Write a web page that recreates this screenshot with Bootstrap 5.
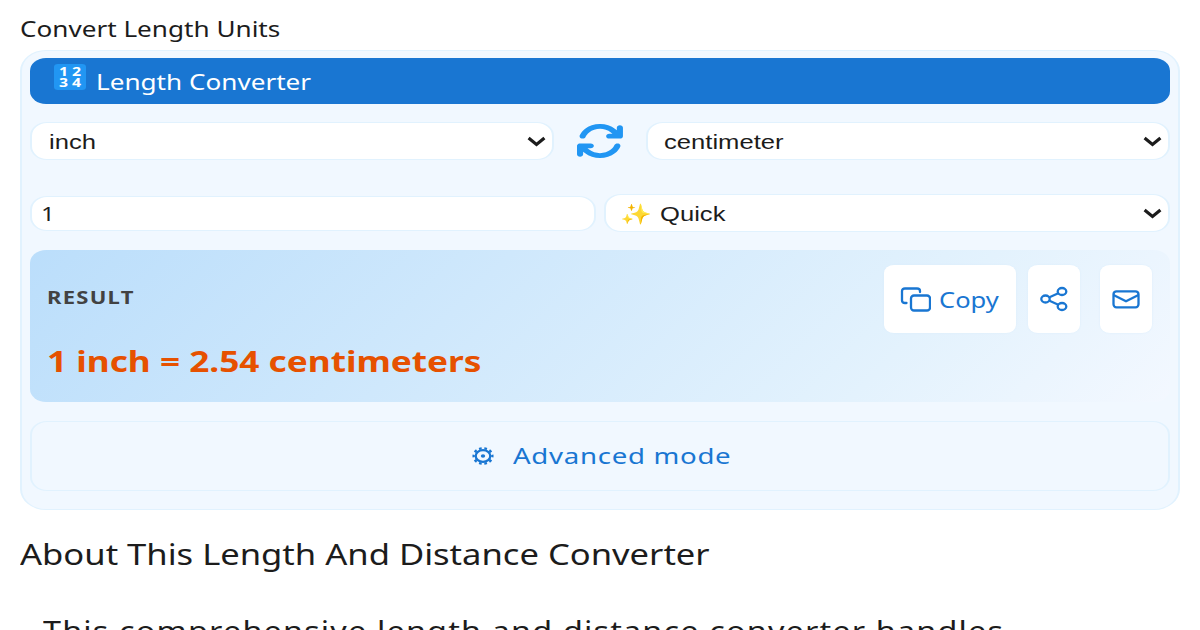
<!DOCTYPE html>
<html lang="en">
<head>
<meta charset="utf-8">
<meta name="viewport" content="width=device-width, initial-scale=1">
<title>Length Converter</title>
<link href="https://cdn.jsdelivr.net/npm/bootstrap@5.3.0/dist/css/bootstrap.min.css" rel="stylesheet">
<style>
  :root { --edge: #e1f2fe; --blue: #1976d2; }
  body { font-family: "Noto Sans", sans-serif; color: #1c1c1c; height: 630px; overflow: hidden; background: #fff; }
  /* wide lettering */
  .wide { display: inline-block; white-space: nowrap; transform-origin: 0 50%; transform: scaleX(var(--k, 1.187)); }
  .page-title { font-size: 22px; line-height: 44px; padding: 6px 0 0 19.500px; height: 50px; }
  .panel { margin: 0 20px; height: 460px; padding: 7px 8px 0; background: #f1f8ff; border: solid var(--edge); border-width: 1.5px 2px; border-radius: 26px / 21px; }
  .panel-head { height: 46px; background: var(--blue); color: #fff; border-radius: 16px / 13px; padding-left: 24px; font-size: 22px; line-height: 46px; }
  .keycap { width: 32px; height: 26px; margin: 6px 10px 0 0; background: #2196f3; border-radius: 4px / 3px; color: #fff; font: 700 13px/11.5px "Noto Sans", sans-serif; display: grid; grid-template-columns: 13px 13px; justify-content: center; align-content: center; text-align: center; }
  .keycap span { transform: scaleX(1.22); }
  .field { background: #fff; border: solid var(--edge); border-width: 1px 2px; border-radius: 17px / 14px; font-family: "Liberation Sans", sans-serif; font-size: 20px; line-height: 36px; height: 38px; color: #1c1c1c; }
  .field .wide { --k: 1.28; padding-top: 1px; }
  .chev { width: 19px; height: 11px; margin-right: 6.500px; }
  .result { margin-top: 18px; height: 152px; border-radius: 16px / 13px; background: linear-gradient(135deg, #bbdefb, #e3f2fd 75%, #f3f8ff); padding: 0 18px 0 17px; }
  .result-label { font-size: 18px; font-weight: 700; letter-spacing: 1px; color: #424242; line-height: 24px; padding-top: 35px; --k: 1.225; }
  .result-value { font-size: 28.5px; font-weight: 700; color: #e65100; line-height: 40px; padding-top: 32px; --k: 1.235; }
  .act { height: 68px; margin-top: 15px; background: #fff; border-radius: 10px / 8px; color: var(--blue); box-shadow: 0 0 2px #d9ecfb; }
  .advanced { margin-top: 19px; height: 70px; border: solid var(--edge); border-width: 1px 2px; border-radius: 17px / 14px; color: var(--blue); font-size: 22.5px; letter-spacing: .56px; padding-left: 440px; --k: 1.228; }
  .about { font-size: 29px; line-height: 44px; margin: 22px 0 0 19.500px; --k: 1.192; font-weight: 400; }
  .intro { font-size: 26.500px; line-height: 40px; letter-spacing: .95px; margin: 35px 0 0 43px; --k: 1.222; }
  svg { display: block; flex: none; }
</style>
</head>
<body>
<div class="page-title"><span class="wide">Convert Length Units</span></div>
<main class="panel">
  <div class="panel-head d-flex">
    <span class="keycap"><span>1</span><span>2</span><span>3</span><span>4</span></span>
    <span class="wide">Length Converter</span>
  </div>
  <div class="d-flex align-items-center" style="margin-top:18px">
    <div class="field d-flex align-items-center justify-content-between" style="width:524px;padding-left:16.500px"><span class="wide">inch</span>
      <svg class="chev" viewBox="0 0 19 11" preserveAspectRatio="none"><path d="M1.6 2 9.5 8.4 17.4 2" fill="none" stroke="#1c1c1c" stroke-width="3.2"/></svg></div>
    <svg class="mx-auto" width="46" height="34" viewBox="16 32 480 448" preserveAspectRatio="none" fill="#2196f3"><path d="M105.1 202.600c7.700-21.800 20.200-42.300 37.800-59.800c62.500-62.500 163.800-62.500 226.300 0L386.300 160H352c-17.700 0-32 14.300-32 32s14.300 32 32 32H463.500c17.700 0 32-14.300 32-32V80c0-17.700-14.300-32-32-32s-32 14.300-32 32v35.200L414.400 97.600c-87.500-87.500-229.300-87.500-316.800 0C73.200 122 55.600 150.700 44.800 181.400c-5.900 16.700 2.900 34.900 19.500 40.800s34.900-2.900 40.800-19.500zM39 289.300c-5 1.500-9.800 4.200-13.700 8.200c-4 4-6.700 8.800-8.100 14c-.9 3.400-1.200 6.500-1.200 9.100V432c0 17.700 14.300 32 32 32s32-14.300 32-32V396.900l17.600 17.500c87.500 87.400 229.300 87.400 316.700 0c24.400-24.400 42.100-53.100 52.900-83.700c5.900-16.700-2.900-34.900-19.500-40.800s-34.900 2.900-40.800 19.500c-7.700 21.800-20.200 42.300-37.800 59.800c-62.500 62.500-163.800 62.500-226.300 0L125.600 352H160c17.700 0 32-14.300 32-32s-14.300-32-32-32H48.400c-3.200 0-6.400 .4-9.400 1.300z"/></svg>
    <div class="field d-flex align-items-center justify-content-between" style="width:524px;padding-left:16px"><span class="wide">centimeter</span>
      <svg class="chev" viewBox="0 0 19 11" preserveAspectRatio="none"><path d="M1.6 2 9.5 8.4 17.4 2" fill="none" stroke="#1c1c1c" stroke-width="3.2"/></svg></div>
  </div>
  <div class="d-flex align-items-center justify-content-between" style="margin-top:34px">
    <div class="field d-flex align-items-center" style="width:566px;height:35px;padding-left:9px"><span class="wide" style="font-family:'Noto Sans',sans-serif;--k:1.2">1</span></div>
    <div class="field d-flex align-items-center" style="width:566px;padding-left:14px"><span class="wide" style="width:40px;font-size:20px">✨</span><span class="wide">Quick</span>
      <svg class="chev ms-auto" viewBox="0 0 19 11" preserveAspectRatio="none"><path d="M1.6 2 9.5 8.4 17.4 2" fill="none" stroke="#1c1c1c" stroke-width="3.2"/></svg></div>
  </div>
  <section class="result d-flex">
    <div class="flex-grow-1">
      <div class="result-label"><span class="wide">RESULT</span></div>
      <div class="result-value"><span class="wide">1 inch = 2.54 centimeters</span></div>
    </div>
    <div class="act d-flex align-items-center" style="width:132px;padding-left:16px;margin-right:12px">
      <svg width="31" height="25" viewBox="0 0 31 25" fill="none" stroke="#1976d2" stroke-width="2.300" stroke-linecap="round"><rect x="11" y="8.500" width="19" height="15" rx="3"/><path d="M6.500 16H5Q2 16 2 13.500V4Q2 1.500 5 1.500H17Q20 1.500 20 4V5"/></svg>
      <span class="wide" style="font-size:21.5px;margin-left:8px;padding-top:2px">Copy</span>
    </div>
    <div class="act d-flex align-items-center justify-content-center" style="width:52px;margin-right:20px">
      <svg width="28" height="26" viewBox="0 0 28 26" fill="none" stroke="#1976d2" stroke-width="2.300"><ellipse cx="5.500" cy="13" rx="4.200" ry="3.500"/><ellipse cx="22" cy="5.500" rx="4.300" ry="3.500"/><ellipse cx="22" cy="20.500" rx="4.300" ry="3.500"/><path d="M9.500 11.200 18.300 7.300M9.500 14.800 18.300 18.700"/></svg>
    </div>
    <div class="act d-flex align-items-center justify-content-center" style="width:52px">
      <svg width="28" height="20" viewBox="0 0 28 20" fill="none" stroke="#1976d2" stroke-width="2.300"><rect x="1.500" y="2.300" width="25" height="16" rx="3"/><path d="M1.500 6 14 12.300 26.500 6"/></svg>
    </div>
  </section>
  <div class="advanced d-flex align-items-center">
    <svg width="22" height="18" viewBox="-11 -9 22 18" fill="none" stroke="#1976d2"><ellipse rx="7.300" ry="5.900" stroke-width="2.300"/><ellipse rx="9.400" ry="7.700" stroke-width="2.300" pathLength="80" stroke-dasharray="4 4" stroke-dashoffset="2"/><ellipse rx="2.200" ry="1.800" fill="#1976d2" stroke="none"/></svg>
    <span class="wide" style="margin-left:18.500px">Advanced mode</span>
  </div>
</main>
<h2 class="about"><span class="wide">About This Length And Distance Converter</span></h2>
<p class="intro"><span class="wide">This comprehensive length and distance converter handles</span></p>
<script src="https://cdn.jsdelivr.net/npm/bootstrap@5.3.0/dist/js/bootstrap.bundle.min.js"></script>
</body>
</html>
